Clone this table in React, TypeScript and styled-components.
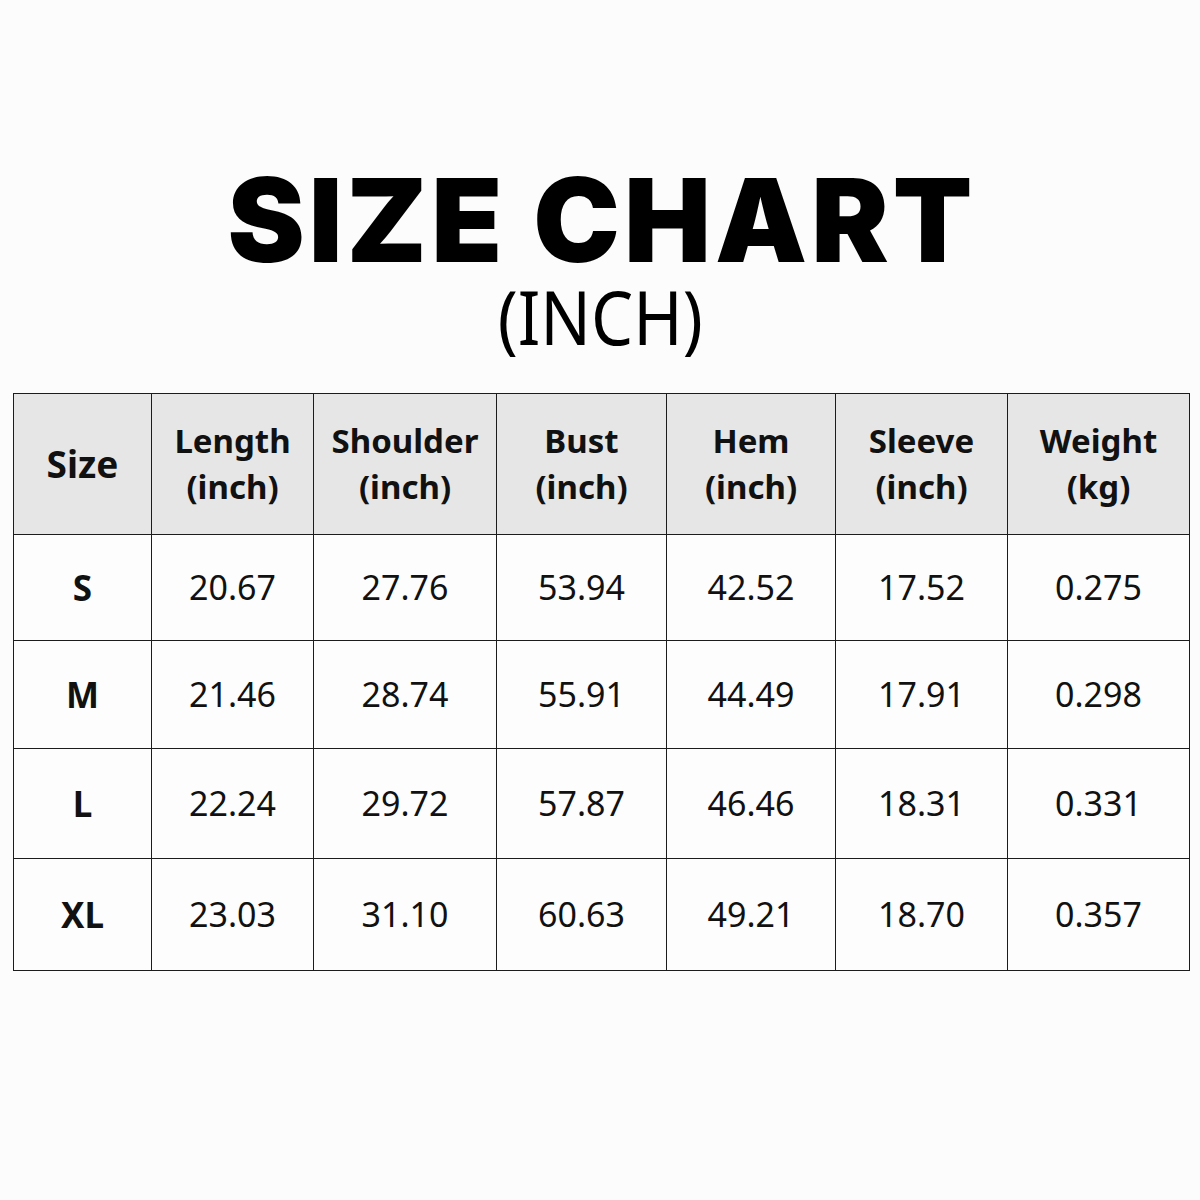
import React from "react";
import styled, { createGlobalStyle } from "styled-components";

const GlobalStyle = createGlobalStyle`
  html, body {
    margin: 0;
    padding: 0;
    background: #fcfcfc;
  }
  body {
    font-family: "Noto Sans", "Open Sans", sans-serif;
    color: #111;
  }
`;

const Page = styled.div`
  width: 1200px;
  height: 1200px;
  display: flex;
  flex-direction: column;
  align-items: center;
  padding-top: 165px;
  box-sizing: border-box;
`;

const Title = styled.h1`
  margin: 0;
  font-family: "Inter", "Noto Sans", sans-serif;
  font-weight: 900;
  font-size: 116px;
  line-height: 110px;
  letter-spacing: 4px;
  padding-left: 4px;
  color: #000;
`;

const Subtitle = styled.div`
  font-family: "Noto Sans", sans-serif;
  font-weight: 400;
  font-size: 75px;
  line-height: 80px;
  margin-top: 1px;
  color: #000;
  transform: scaleX(0.89);
`;

const Grid = styled.div`
  margin-top: 37px;
  align-self: flex-start;
  margin-left: 13px;
  display: grid;
  grid-template-columns: 138px 162px 183px 170px 169px 172px 182px;
  grid-template-rows: 141px 106px 108px 110px 112px;
  border-top: 1.5px solid #1c1c1c;
  border-left: 1.5px solid #1c1c1c;
`;

const Cell = styled.div<{ $head?: boolean; $bold?: boolean; $size?: number }>`
  display: flex;
  align-items: center;
  justify-content: center;
  text-align: center;
  border-right: 1.5px solid #1c1c1c;
  border-bottom: 1.5px solid #1c1c1c;
  background: ${({ $head }) => ($head ? "#e6e6e6" : "#fdfdfd")};
  font-size: ${({ $size }) => $size ?? 34}px;
  font-weight: ${({ $bold }) => ($bold ? 700 : 400)};
  line-height: 1.4;
  color: #111;
`;

const headers = [
  ["Size"],
  ["Length", "(inch)"],
  ["Shoulder", "(inch)"],
  ["Bust", "(inch)"],
  ["Hem", "(inch)"],
  ["Sleeve", "(inch)"],
  ["Weight", "(kg)"],
];

const rows = [
  ["S", "20.67", "27.76", "53.94", "42.52", "17.52", "0.275"],
  ["M", "21.46", "28.74", "55.91", "44.49", "17.91", "0.298"],
  ["L", "22.24", "29.72", "57.87", "46.46", "18.31", "0.331"],
  ["XL", "23.03", "31.10", "60.63", "49.21", "18.70", "0.357"],
];

const App: React.FC = () => {
  return (
    <Page>
      <GlobalStyle />
      <Title>SIZE CHART</Title>
      <Subtitle>(INCH)</Subtitle>
      <Grid>
        {headers.map((h) => (
          <Cell key={h[0]} $head $bold $size={h.length === 1 ? 37 : 33}>
            <div>
              {h.map((line) => (
                <div key={line}>{line}</div>
              ))}
            </div>
          </Cell>
        ))}
        {rows.map((row) =>
          row.map((value, i) => (
            <Cell key={row[0] + i} $bold={i === 0} $size={i === 0 ? 35 : 34}>
              {value}
            </Cell>
          ))
        )}
      </Grid>
    </Page>
  );
};

export default App;
